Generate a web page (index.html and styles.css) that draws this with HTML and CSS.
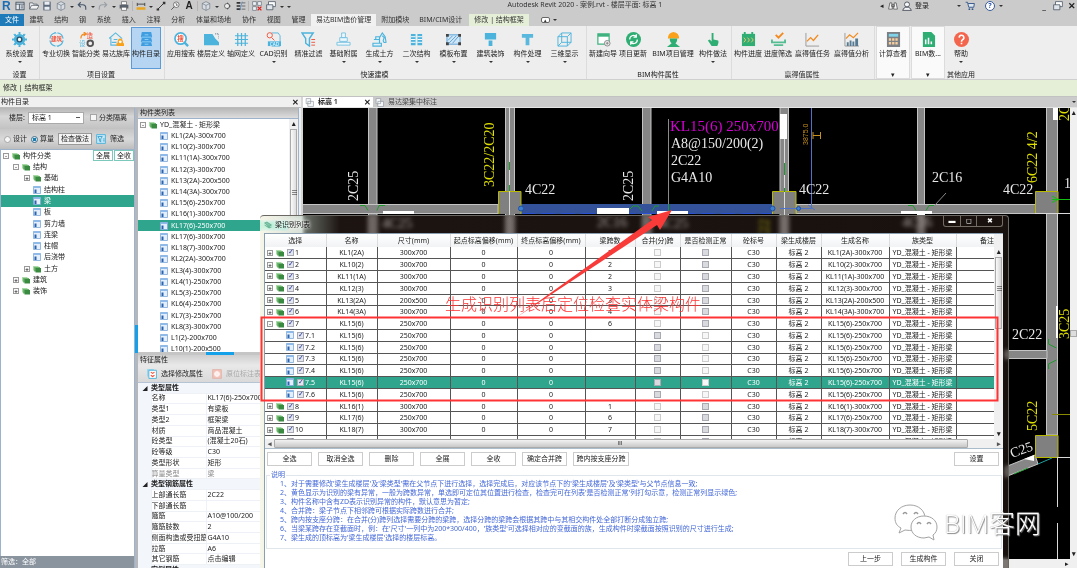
FILE: index.html
```html
<!DOCTYPE html>
<html lang="zh-CN">
<head>
<meta charset="utf-8">
<title>Autodesk Revit 2020 - 案例.rvt - 楼层平面: 标高 1</title>
<link rel="stylesheet" href="styles.css">
</head>
<body>
<svg class="defs" aria-hidden="true">
  <symbol id="i-win" viewBox="0 0 16 16"><rect x="1.500" y="2" width="13" height="12" fill="#e8eef4" stroke="#4d5a66" stroke-width="1.500"/><path d="M1 5h14M7 5v9M9 8h4M9 11h4" stroke="#4d5a66" stroke-width="1.500"/></symbol>
  <symbol id="i-open" viewBox="0 0 16 16"><path d="M1 13V3h5l1 2h6v3M1 13l3-6h12l-3 6z" fill="#f4f4f4" stroke="#59636e" stroke-width="1.300"/></symbol>
  <symbol id="i-save" viewBox="0 0 16 16"><path d="M2 1h12v14H2z" fill="#5c6a7c"/><path d="M4 1h8v5H4zM4 9h8v5H4z" fill="#e9edf2"/></symbol>
  <symbol id="i-cube" viewBox="0 0 16 16"><path d="M8 1l6 3v8l-6 3-6-3V4z" fill="#d8dde3" stroke="#65717d"/><path d="M2 4l6 3 6-3M8 7v8" fill="none" stroke="#65717d"/></symbol>
  <symbol id="i-undo" viewBox="0 0 16 16"><path d="M6 2L2 6l4 4M2 6h7q5 0 5 5v3" fill="none" stroke="#46566a" stroke-width="1.800"/></symbol>
  <symbol id="i-redo" viewBox="0 0 16 16"><path d="M10 2l4 4-4 4M14 6H7q-5 0-5 5v3" fill="none" stroke="#9aa0a7" stroke-width="1.800"/></symbol>
  <symbol id="i-print" viewBox="0 0 16 16"><path d="M4 1h8v5H4z" fill="#fff" stroke="#555"/><path d="M1 6h14v6H1z" fill="#59636e"/><path d="M4 10h8v5H4z" fill="#fff" stroke="#555"/></symbol>
  <symbol id="i-meas" viewBox="0 0 16 16"><path d="M1 10h14v4H1z" fill="#e9a51e"/><path d="M2 3v5M14 3v5M2 5h12" stroke="#444" stroke-width="1.500"/></symbol>
  <symbol id="i-line" viewBox="0 0 16 16"><path d="M3 13L13 3" stroke="#333" stroke-width="1.500"/><path d="M1 12h4v3H1zM11 1h4v4h-4z" fill="#333"/></symbol>
  <symbol id="i-tag" viewBox="0 0 16 16"><circle cx="10" cy="6" r="4.500" fill="#f3f3f3" stroke="#444"/><path d="M7 9l-5 5M9 4l2 1v3" fill="none" stroke="#444" stroke-width="1.300"/></symbol>
  <symbol id="i-sec" viewBox="0 0 16 16"><path d="M1 8h3M8 2l6 6-6 6" fill="#333"/><circle cx="8" cy="8" r="4" fill="#eee" stroke="#333"/></symbol>
  <symbol id="i-thin" viewBox="0 0 16 16"><path d="M1 3h6M1 8h6M1 13h6" stroke="#333" stroke-width="2.500"/><path d="M9 3h6M9 8h6M9 13h6" stroke="#333"/><path d="M10 1L6 15" stroke="#3f7ac0"/></symbol>
  <symbol id="i-closeh" viewBox="0 0 16 16"><path d="M1 1h6v6H1zM9 1h6v6H9zM1 9h6v6H1z" fill="#eef2f6" stroke="#59636e"/><path d="M9 9l6 6M15 9l-6 6" stroke="#d22" stroke-width="2.200"/></symbol>
  <symbol id="i-stack" viewBox="0 0 16 16"><path d="M4 1h11v8H4z" fill="#fff" stroke="#4d5a66" stroke-width="1.300"/><path d="M1 6h10v8H1z" fill="#dfe5eb" stroke="#4d5a66" stroke-width="1.300"/></symbol>
  <symbol id="i-bino" viewBox="0 0 16 16"><path d="M3 3h3l1 10H1zM10 3h3l2 10H9zM6 6h4v3H6z" fill="#f5f5f5" stroke="#333"/></symbol>
  <symbol id="i-user" viewBox="0 0 16 16"><circle cx="8" cy="5.500" r="4" fill="#f7f7f7" stroke="#444b58" stroke-width="1.400"/><path d="M1 15q2-5 5-5h4q3 0 5 5z" fill="#f7f7f7" stroke="#444b58" stroke-width="1.400"/></symbol>
  <symbol id="i-cart" viewBox="0 0 16 16"><path d="M1 2h3l2 8h8l1-6H5" fill="#dfe7f0" stroke="#35588a" stroke-width="1.500"/><circle cx="7" cy="13" r="1.500" fill="#35588a"/><circle cx="12" cy="13" r="1.500" fill="#35588a"/></symbol>
  <symbol id="i-view" viewBox="0 0 16 16"><path d="M2 1h8v5h5v9H5v-5H2z" fill="#f8f8f8" stroke="#7c8894"/><path d="M5 6h5v4H5z" fill="none" stroke="#7c8894"/></symbol>

  <symbol id="r-gear" viewBox="0 0 16 16"><path d="M7 0h2v16H7zM0 7h16v2H0z" fill="#4cb3dc"/><path d="M2 3l1-1 11 11-1 1zM13 2l1 1L3 14l-1-1z" fill="#4cb3dc" stroke="#4cb3dc"/><circle cx="8" cy="8" r="6" fill="#4cb3dc"/><circle cx="8" cy="8" r="2.500" fill="#fff" stroke="#2c5572" stroke-width="1.500"/></symbol>
  <symbol id="r-cycle" viewBox="0 0 16 16"><path d="M1 7a7 7 0 0 1 6-6l-1-1M9 1a7 7 0 0 1 6 6M15 9a7 7 0 0 1-6 6l1 1M7 15a7 7 0 0 1-6-6" fill="none" stroke="#59b8dd" stroke-width="1.300"/><text x="8" y="10" text-anchor="middle" font-size="6" fill="#f0533c" font-weight="700">建筑</text></symbol>
  <symbol id="r-smart" viewBox="0 0 16 16"><path d="M2 7q0-5 5-5M5 0l3 2-3 2" fill="none" stroke="#f28a1e" stroke-width="1.300"/><text x="8" y="6" font-size="7" fill="#f0533c">造</text><text x="0" y="15" font-size="7" fill="#59b8dd">设</text><circle cx="12" cy="12" r="3" fill="none" stroke="#555" stroke-width="2"/></symbol>
  <symbol id="r-lib" viewBox="0 0 16 16"><path d="M0 7l7-6 7 6M2 6v8h7M5 8h4M3 11h5" fill="none" stroke="#59b8dd" stroke-width="1.200"/><path d="M8 12h8v3H8zM9 12q0-5 3-5t3 5z" fill="#f9a11b"/><circle cx="12" cy="10.500" r="1.500" fill="#fff"/></symbol>
  <symbol id="r-cab" viewBox="0 0 16 16"><path d="M3 0h10l1 5-1 1 1 4-1 1 1 4H2l1-4-1-1 1-4-1-1z" fill="#409ee0"/><path d="M3 5.500h10M3 10.500h10M6 3h4M6 8h4M6 13h4" stroke="#8fd0f7"/></symbol>
  <symbol id="r-find" viewBox="0 0 16 16"><circle cx="7" cy="7" r="6" fill="#fff" stroke="#4cb3dc" stroke-width="1.800"/><path d="M11 11l4 4" stroke="#4cb3dc" stroke-width="2.500"/><text x="7" y="10" text-anchor="middle" font-size="7" fill="#f0533c" font-weight="700">搜</text></symbol>
  <symbol id="r-floor" viewBox="0 0 16 16"><path d="M0 2h9l3 5 4 4v3H0z" fill="#4cb3dc"/><path d="M12 2h4v5" fill="none" stroke="#3b5f73" stroke-dasharray="1 1"/></symbol>
  <symbol id="r-grid" viewBox="0 0 16 16"><path d="M4 1v14M8 1v14M12 1v14M1 4h14M1 8h14M1 12h14" stroke="#4cb3dc" stroke-width="1.300"/></symbol>
  <symbol id="r-cad" viewBox="0 0 16 16"><path d="M6 1h7l2 3v11H6" fill="none" stroke="#59b8dd"/><circle cx="4" cy="3.500" r="2.800" fill="none" stroke="#f0533c"/><path d="M6 6l3 3" stroke="#f0533c"/><path d="M2 10h14v5H2z" fill="#4cb3dc"/><text x="9" y="14.500" text-anchor="middle" font-size="5" fill="#fff">CAD</text></symbol>
  <symbol id="r-filter" viewBox="0 0 16 16"><path d="M1 1h12L9 7v8l-4-3V7z" fill="none" stroke="#4cb3dc" stroke-width="1.500"/><path d="M11 8h4M11 11h4M11 14h4" stroke="#f0533c"/></symbol>
  <symbol id="r-base" viewBox="0 0 16 16"><path d="M6 1h4v5H6zM4 6h8v4H4zM1 11h14v3H1z" fill="#eef8fc" stroke="#77c2e0"/></symbol>
  <symbol id="r-dig" viewBox="0 0 16 16"><path d="M1 12h9v3H1zM2 8h6v4M4 8V5h4v3M8 6l3-5 3 4 1 6q-3 1-3-2l1-3-2-2" fill="#dff1f8" stroke="#4cb3dc" stroke-width="1.200"/></symbol>
  <symbol id="r-second" viewBox="0 0 16 16"><path d="M2 2h5v12H2zM9 2h5v12H9z" fill="#4cb3dc"/><path d="M2 5h5M2 8h5M2 11h5M9 5h5M9 8h5M9 11h5" stroke="#fff"/></symbol>
  <symbol id="r-board" viewBox="0 0 16 16"><path d="M1 3h14v10H1z" fill="#cfe6f6" stroke="#5a9fd6"/><path d="M3 12l8-8M7 12l6-7M2 9l5-5" stroke="#5a9fd6"/><path d="M0 2h3v3H0zM13 2h3v3h-3zM0 11h3v3H0zM13 11h3v3h-3z" fill="#444"/></symbol>
  <symbol id="r-brush" viewBox="0 0 16 16"><path d="M2 1h12v7H2zM6 9h4v6H6z" fill="#4cb3dc"/></symbol>
  <symbol id="r-tee" viewBox="0 0 16 16"><path d="M2 2h12v4h-4v8H6V6H2z" fill="#59b8dd"/></symbol>
  <symbol id="r-3d" viewBox="0 0 16 16"><path d="M1 5h10v10H1zM5 1h10v10H5zM1 5l4-4M11 5l4-4M11 15l4-4M1 15l4-4" fill="none" stroke="#4cb3dc"/></symbol>
  <symbol id="r-new" viewBox="0 0 16 16"><path d="M2 2h12v11H2z" fill="#fff" stroke="#3fb27f" stroke-width="1.300"/><path d="M2 2h12v3H2z" fill="#3fb27f"/><circle cx="12" cy="12" r="3" fill="#eee" stroke="#888"/><path d="M12 10.500v3M10.500 12h3" stroke="#888"/></symbol>
  <symbol id="r-refresh" viewBox="0 0 16 16"><circle cx="8" cy="8" r="8" fill="#2fae74"/><path d="M4 8a4 4 0 0 1 7-3M12 8a4 4 0 0 1-7 3M11 2.500V5.500H8M5 13.500V10.500H8" fill="none" stroke="#fff" stroke-width="1.300"/></symbol>
  <symbol id="r-worker" viewBox="0 0 16 16"><path d="M2 7q0-6 6-7 6 1 6 7z" fill="#f9a11b"/><path d="M4 7h8q0 4-2 5l5 4H1l5-4Q4 11 4 7z" fill="#2fae74"/></symbol>
  <symbol id="r-hand" viewBox="0 0 16 16"><path d="M6 1h2v7l5 1q1 2-1 6H6L2 9l2-1 2 2z" fill="#2fae74"/></symbol>
  <symbol id="r-cal" viewBox="0 0 16 16"><path d="M1 2h14v13H1z" fill="#2fae74"/><path d="M4 0v3M12 0v3" stroke="#2fae74" stroke-width="2"/><path d="M3 6l2 2.500L3 11M7 6l2 2.500L7 11M11 6l2 2.500L11 11" fill="none" stroke="#f4c26a"/></symbol>
  <symbol id="r-check" viewBox="0 0 16 16"><path d="M5 3l3 3 5-5" fill="none" stroke="#f28a1e" stroke-width="2"/><path d="M1 8v3h14V8M3 14h10" fill="none" stroke="#55bd92" stroke-width="2"/></symbol>
  <symbol id="r-trend" viewBox="0 0 16 16"><path d="M1 1v14h14" fill="none" stroke="#999"/><path d="M2 10l4-4 3 3 5-6" fill="none" stroke="#f28a1e" stroke-width="1.400"/></symbol>
  <symbol id="r-bars" viewBox="0 0 16 16"><path d="M1 1v14h15" fill="none" stroke="#999"/><path d="M3 11h2v4H3zM6 9h2v6H6zM9 10h2v5H9zM12 7h3v8h-3z" fill="#557a91"/><path d="M2 7l4-4 4 3 5-5" fill="none" stroke="#f28a1e" stroke-width="1.300"/></symbol>
  <symbol id="r-calc" viewBox="0 0 16 16"><path d="M1 0h14v16H1z" fill="#7c7f84"/><path d="M3 2h10v3H3z" fill="#7fd4ea"/><path d="M3 8h10M3 12h10" stroke="#f5cfa0" stroke-width="2.500" stroke-dasharray="2.500 1"/></symbol>
  <symbol id="r-doc" viewBox="0 0 16 16"><path d="M2 0h9l4 4v12H2z" fill="#2fae74"/><path d="M5 8v5M8 6v7M11 10v3" stroke="#fff" stroke-width="1.600"/></symbol>
  <symbol id="r-help" viewBox="0 0 16 16"><circle cx="8" cy="8" r="8" fill="#f3664d"/><path d="M5.500 6a2.500 2.500 0 1 1 3.500 2.300q-1 .7-1 2M8 11.500v1.500" fill="none" stroke="#fff" stroke-width="1.700"/></symbol>

  <symbol id="t-folder" viewBox="0 0 16 16"><path d="M0 2h11v9H0z" fill="#a9dba9"/><path d="M2 4h12v9H2z" fill="#6fb56f"/><path d="M5 6h11v9H5z" fill="#3b8a42"/></symbol>
  <symbol id="t-leaf" viewBox="0 0 16 16"><path d="M1 1h14v14H1z" fill="#e4effb" stroke="#7ba7d8" stroke-width="1.600"/><path d="M1 1h14v3H1z" fill="#8fbbea"/><path d="M3 7h4v7H3z" fill="#2b62b0"/></symbol>
  <symbol id="t-edit" viewBox="0 0 16 16"><path d="M0 0h11v12H0z" fill="#9bd8ee"/><path d="M3 2h12v13H3z" fill="#fff" stroke="#4cb3dc" stroke-width="1.500"/><path d="M6 5l3 2 3-2M6 10l3 2 3-2" fill="none" stroke="#f0533c" stroke-width="1.800"/></symbol>
  <symbol id="t-note" viewBox="0 0 16 16"><path d="M1 1h14v14H1z" fill="#f3c2b8" stroke="#dda79c"/><path d="M5 5h6v6H5zM8 3v10M3 8h10" fill="none" stroke="#fff" stroke-width="1.500"/></symbol>
  <symbol id="t-filter" viewBox="0 0 16 16"><path d="M1 1h14v14H1z" fill="#c9e8f6" stroke="#4cb3dc" stroke-width="1.500"/><path d="M3 4h7L7.500 8v5L5.500 11V8zM11 8h3M11 11h3" fill="none" stroke="#2f9bcb" stroke-width="1.300"/></symbol>
</svg>

<div class="app">
  <header class="titlebar">
    <div class="quick" id="quick"></div>
    <h1 class="title">Autodesk Revit 2020 - 案例.rvt - 楼层平面: 标高 1</h1>
    <div class="account">
      <span>◂</span>
      <button aria-label="搜索"><svg><use href="#i-bino"/></svg></button>
      <button class="login"><svg><use href="#i-user"/></svg>登录</button>
      <i class="caret push"></i>
      <button aria-label="商店"><svg><use href="#i-cart"/></svg></button>
      <button class="qmark" aria-label="帮助">?</button>
      <i class="caret"></i>
      <div class="winctl"><button aria-label="最小化">_</button><button aria-label="还原"><svg><use href="#i-stack"/></svg></button><button aria-label="关闭">✕</button></div>
    </div>
  </header>

  <nav class="tabs">
    <button class="tab file">文件</button>
    <div class="tabset">
      <button class="tab">建筑</button><button class="tab">结构</button><button class="tab">钢</button><button class="tab">系统</button><button class="tab">插入</button><button class="tab">注释</button><button class="tab">分析</button><button class="tab">体量和场地</button><button class="tab">协作</button><button class="tab">视图</button><button class="tab">管理</button>
    </div>
    <button class="tab active">易达BIM造价管理</button>
    <button class="tab">附加模块</button>
    <button class="tab">BIM/CIM设计</button>
    <button class="tab context">修改 | 结构框架</button>
    <button class="tab mode" aria-label="显示方式"><span class="pill">▴</span><i class="caret"></i></button>
  </nav>

  <section class="ribbon" id="ribbon"></section>
  <div class="options">修改 | 结构框架</div>

  <main class="work">
    <aside class="dock">
      <div class="dock-head"><span>构件目录</span><button aria-label="关闭面板">✕</button></div>
      <div class="dock-cols">
        <section class="catalog">
          <div class="bar bar-a">
            <label for="level">楼层:</label>
            <select id="level"><option>标高 1</option></select>
            <label class="opt"><input type="checkbox">分类隔离</label>
          </div>
          <div class="bar bar-b">
            <label class="opt"><input type="radio" name="mode">设计</label>
            <label class="opt"><input type="radio" name="mode" checked>算量</label>
            <button class="box">检查做法</button>
            <button class="flt"><svg><use href="#t-filter"/></svg>筛选</button>
          </div>
          <div class="tree-wrap"><ul class="tree" id="catalog"></ul></div>
          <div class="status">筛选：全部</div>
        </section>
        <div class="split"><i></i></div>
        <section class="detail">
          <h2>构件类列表</h2>
          <div class="list-wrap"><ul class="tree" id="types"></ul><div class="vscroll"><b>▴</b><i>≡</i></div></div>
          <div class="hsplit"><i></i></div>
          <h2 class="prop-title">特征属性</h2>
          <div class="prop-tools">
            <button><svg><use href="#t-edit"/></svg>选择修改属性</button>
            <button disabled><svg><use href="#t-note"/></svg>原位标注表</button>
          </div>
          <div class="prop-wrap"><table class="props"><colgroup><col class="c13"><col class="c55"><col></colgroup><tbody id="props"></tbody></table></div>
        </section>
      </div>
    </aside>

    <section class="views">
      <div class="view-tabs">
        <button class="vtab on"><svg><use href="#i-view"/></svg>标高 1<span>✕</span></button>
        <button class="vtab"><svg><use href="#i-view"/></svg>易达梁集中标注</button>
        <i class="caret"></i>
      </div>
      <div class="view-body">
        <svg class="plan" role="img" aria-label="梁平面图">
          <g transform="translate(-303 -107)">
            <g fill="#868686" stroke="#c4c4c4">
              <path d="M368.500 100h8.500v150h-8.500zM505.500 100h9v150h-9zM642.500 100h8.500v150h-8.500zM780 100h8.500v150H780zM917.500 100h7v150h-7zM1046.500 100h11v334h-11z"/>
              <path d="M300 203.500h198v9H300zM796 203.500h240v9H796zM1005 349.500h42v8h-42z"/>
              <path d="M1005 466l30-12 3 9-33 13z"/>
            </g>
            <path d="M1024 458l10-4v6z" fill="#fff"/>
            <path d="M521 203h251v10H521z" fill="#345299"/>
            <path d="M521 212.500h251" stroke="#2a52d0" stroke-dasharray="14 6"/>
            <g fill="#808080" stroke="#b8b800"><path d="M498.500 213v-22.500H521V213M772.500 213v-22.500H796V213M1035.500 212.500v-22h22.500v22M1035.500 434.500h22.500v22h-22.500z"/></g>
            <path d="M509.500 107v140M784.500 138v104M1035 212.500h36M1057.500 213v110M1058 456.500h13M1057.500 456v50M1057.500 522v46" stroke="#d9d9d9"/>
            <path d="M780 113h7v25h-7zM1053 107h5v12h-5zM597 207h32v6h-32zM383 210h31v3h-31zM657 210h31v3h-31zM901 210h31v3h-31zM917 212h8v3h-8zM1056 305h2v32h-2z" fill="#fff"/>
            <path d="M668.500 118v85M946 192l-11 12" stroke="#8b8b8b"/>
            <g fill="none" stroke="#1f9a2d"><path d="M360 204.500h5l3 5M385 204.500h-6l-2 5M630 208l3-3h5l4 5M652 210l3-5h4M668.500 203v7M509.500 161v8M509.500 184v6M784.500 162v12M784.500 187v4M908 204.500h5l3 5M934 204.500h-5l-3 5M1048.500 338v5l8 4M1048.500 368v-5l8-4"/><path d="M1052 198.500h19M1052 195l6 3.500-6 3" stroke="#12c012"/></g>
            <path d="M1014 473l14-6" stroke="#1f9a2d"/><path d="M1038 463l14-6" stroke="#1aa0a0"/>
            <path d="M811.500 107v100M780 207.500h32M808 204l7 5" stroke="#4d72c8" fill="none"/>
            <g fill="#3f7fd0" stroke="#1f4fa0"><circle cx="521" cy="207.500" r="2.500"/><circle cx="772.500" cy="207.500" r="2.500"/><circle cx="798.500" cy="207.500" r="2"/></g>
            <path d="M813 134.500h8M813 131v7M820.500 131v7" stroke="#c8901e"/>
            <path d="M1052 413.500h19" stroke="#8a8a00"/>
            <g class="cad">
              <text x="525" y="193">4C22</text><text x="799" y="193">4C22</text><text x="932" y="181">2C16</text><text x="1003" y="193">4C22</text><text x="1012" y="338">2C22</text><text x="1064" y="187">1</text>
              <text x="671" y="147">A8@150/200(2)</text><text x="671" y="164">2C22</text><text x="671" y="181">G4A10</text>
              <text class="big magenta" x="670" y="130">KL15(6) 250x700</text>
              <text transform="translate(358 200) rotate(-90)">2C25</text>
              <text transform="translate(633 200) rotate(-90)">2C25</text>
              <text transform="translate(1012 457) rotate(-20)">C25</text>
              <text x="382" y="227">4C25</text><text x="597" y="226">2C16</text><text x="658" y="227">4C25</text><text x="902" y="226">4C16</text>
              <g class="yellow">
                <text transform="translate(494 186) rotate(-90)">3C22/2C20</text>
                <text transform="translate(1037 182) rotate(-90)">6C22 4/2</text>
                <text transform="translate(1069 120) rotate(-90)">2C25</text>
                <text transform="translate(1069 338) rotate(-90)">3C25</text>
                <text transform="translate(1037 430) rotate(-90)">5C22</text>
                <text transform="translate(769 248) rotate(-90)">3C22</text>
              </g>
              <text class="dim" transform="translate(808 144) rotate(-90)">3875.0</text>
            </g>
          </g>
        </svg>
        <div class="vbar"><b>▴</b><i></i><b>▾</b></div>
        <div class="hbar">▸</div>
      </div>
    </section>
  </main>
</div>

<section class="dialog" role="dialog" aria-label="梁识别列表">
  <div class="dlg-title">
    <svg viewBox="0 0 16 16"><path d="M1 4l5-2 9 6-5 3zM1 8l9 6 5-2" fill="#7fc8a8" stroke="#3f8f70"/></svg>
    <span>梁识别列表</span>
    <div class="dlg-ctl"><button aria-label="最小化">▬</button><button aria-label="最大化">◻</button><button aria-label="关闭">✖</button></div>
  </div>
  <div class="dlg-body">
    <div class="grid-wrap">
      <div class="grid-clip">
        <table class="beams">
          <colgroup><col class="c61"><col class="c51"><col class="c73"><col class="c67"><col class="c68"><col class="c50"><col class="c45"><col class="c51"><col class="c45"><col class="c45"><col class="c68"><col class="c67"><col></colgroup>
          <thead><tr><th>选择</th><th>名称</th><th>尺寸(mm)</th><th>起点标高偏移(mm)</th><th>终点标高偏移(mm)</th><th>梁跨数</th><th>合并(分)跨</th><th>是否检测正常</th><th>砼标号</th><th>梁生成楼层</th><th>生成名称</th><th>族类型</th><th class="last">备注</th></tr></thead>
          <tbody id="beams"></tbody>
        </table>
      </div>
      <div class="gv"><b>▴</b><i>≡</i><b>▾</b></div>
    </div>
    <div class="gh"><b>◂</b><i>III</i><b>▸</b></div>
    <div class="actions">
      <button>全选</button><button>取消全选</button><button>删除</button><button>全展</button><button>全收</button><button>确定合并跨</button><button class="wide">跨内按支座分跨</button><button class="end">设置</button>
    </div>
    <fieldset>
      <legend>说明</legend>
      <p>1、对于需要修改'梁生成楼层'及'梁类型'需在父节点下进行选择，选择完成后，对应该节点下的'梁生成楼层'及'梁类型'与父节点信息一致;</p>
      <p>2、黄色显示为识别的梁有异常，一般为跨数异常，单选即可定位其位置进行检查，检查完可在列表'是否检测正常'列打勾示意，检测正常列显示绿色;</p>
      <p>3、构件名称中含有ZD表示识别异常的构件，默认意思为暂定;</p>
      <p>4、合并跨：梁子节点下相邻跨可根据实际跨数进行合并;</p>
      <p>5、跨内按支座分跨：在合并(分)跨列选择需要分跨的梁跨，选择分跨的梁跨会根据其跨中与其相交构件处全部打断分成独立跨;</p>
      <p>6、当梁某跨存在变截面时，例：在'尺寸'一列中为200*300/400，'族类型'可选择相对应的变截面的族，生成构件时梁截面按照识别的尺寸进行生成;</p>
      <p>7、梁生成的顶标高为'梁生成楼层'选择的楼层标高。</p>
    </fieldset>
    <div class="actions foot"><button>上一步</button><button>生成构件</button><button>关闭</button></div>
  </div>
</section>

<svg class="markup" aria-hidden="true">
  <g transform="translate(-260 -200)">
    <rect x="261.500" y="317.500" width="736" height="83" fill="none" stroke="#f33" stroke-width="2"/>
    <path d="M517 317L652 220l-4-3 24-7-12 20-3-5z" fill="#f83a38"/>
    <text x="445" y="310">生成识别列表后定位检查实体梁构件</text>
  </g>
</svg>

<div class="watermark">
  <svg viewBox="0 0 44 38"><g fill="#fff" stroke="#a2a2a2"><path d="M16 1C7 1 1 7 1 14c0 5 2 8 6 10l-2 5 6-3c12 2 20-3 20-12C31 7 25 1 16 1z"/><path d="M30 12c-8 0-13 5-13 11s5 11 13 11l5-1 5 3-1-5c3-2 4-5 4-8 0-6-5-11-13-11z"/></g><g fill="none" stroke="#999" stroke-width="1.500"><path d="M9 10q2-3 4 0M20 10q2-3 4 0M23 20q2-3 4 0M33 20q2-3 4 0"/></g></svg>
  <span>BIM客网</span>
</div>
<script src="app.js"></script>
</body>
</html>
```

FILE: app.js
```js
const icon = (id) => `<svg><use href="#${id}"/></svg>`;
const fill = (id, html) => { document.getElementById(id).innerHTML = html; };

// Quick access toolbar: "v" is a drop-down caret, "|" a separator.
fill('quick', '<b class="logo">R</b>' + [
  'i-win', 'i-open', 'i-save', 'i-cube', 'v', 'i-undo', 'v', 'i-redo', 'v', 'i-print', '|',
  'i-meas', 'v', 'i-line', 'i-tag', 'A', '|', 'i-cube', 'v', 'i-sec', 'i-thin', '|', 'i-closeh', 'i-stack', 'v', 'v'
].map((k) => {
  if (k === 'v') return '<i class="caret"></i>';
  if (k === '|') return '<i class="sep"></i>';
  if (k === 'A') return '<button class="letter">A</button>';
  return `<button aria-label="${k.slice(2)}">${icon(k)}</button>`;
}).join(''));

// Ribbon groups: [label, class, [[text, icon, size, hasMenu]]]
const groups = [
  ['设置', 'g-set', [['系统设置', 'r-gear', 'm', 1]]],
  ['项目设置', '', [['专业切换', 'r-cycle', 's'], ['智能分类', 'r-smart', 's'], ['易达族库', 'r-lib', 's'], ['构件目录', 'r-cab', 's on']]],
  ['快速建模', '', [['应用搜索', 'r-find', 's'], ['楼层定义', 'r-floor', 's'], ['轴网定义', 'r-grid', 's'], ['CAD识别', 'r-cad', 'm', 1], ['精准过滤', 'r-filter', 'm'], ['基础附属', 'r-base', 'm', 1], ['生成土方', 'r-dig', 'l', 1], ['二次结构', 'r-second', 'l', 1], ['模板布置', 'r-board', 'l', 1], ['建筑装饰', 'r-brush', 'l', 1], ['构件处理', 'r-tee', 'l', 1], ['三维显示', 'r-3d', 'l', 1]]],
  ['BIM构件属性', '', [['新建向导', 'r-new', 's'], ['项目更新', 'r-refresh', 's'], ['BIM项目管理', 'r-worker', 'xl'], ['构件做法', 'r-hand', 's', 1]]],
  ['赢得值属性', '', [['构件进度', 'r-cal', 's'], ['进度筛选', 'r-check', 's'], ['赢得值任务', 'r-trend', 'x'], ['赢得值分析', 'r-bars', 'x']]],
  ['▾', 'card', [['计算查看', 'r-calc', 's']]],
  ['▾', 'card', [['BIM数...', 'r-doc', 's']]],
  ['其他应用', 'last', [['帮助', 'r-help', 's', 1]]]
];
fill('ribbon', groups.map(([name, cls, items]) =>
  `<div class="group ${cls}"><div class="items">` +
  items.map(([t, i, s, m]) => `<button class="rb ${s}">${icon(i)}<span>${t}</span>${m ? '<i class="caret"></i>' : ''}</button>`).join('') +
  `</div><div class="gname">${name}</div></div>`).join(''));

// Trees: [level, kind, text, selected]; kind is "-", "+" or "leaf".
const row = ([lv, kind, text, sel, extra]) =>
  `<li class="lv${lv} ${kind === 'leaf' ? 'leaf' : ''} ${sel ? 'sel' : ''}">` +
  (kind === 'leaf' ? icon('t-leaf') : `<button class="tg">${kind}</button>${icon('t-folder')}`) +
  `<span>${text}</span>${extra || ''}</li>`;
fill('catalog', [
  [0, '-', '构件分类', 0, '<button class="mini first">全展</button><button class="mini">全收</button>'],
  [1, '-', '结构'], [2, '+', '基础'], [2, 'leaf', '结构柱'], [2, 'leaf', '梁', 1], [2, 'leaf', '板'], [2, 'leaf', '剪力墙'],
  [2, 'leaf', '连梁'], [2, 'leaf', '柱帽'], [2, 'leaf', '后浇带'], [2, '+', '土方'], [1, '+', '建筑'], [1, '+', '装饰']
].map(row).join(''));
fill('types', row([0, '-', 'YD_混凝土 - 矩形梁']) + [
  'KL1(2A)-300x700', 'KL10(2)-300x700', 'KL11(1A)-300x700', 'KL12(3)-300x700', 'KL13(2A)-200x500', 'KL14(3A)-300x700',
  'KL15(6)-250x700', 'KL16(1)-300x700', 'KL17(6)-250x700', 'KL17(6)-300x700', 'KL18(7)-300x700', 'KL2(2A)-300x700',
  'KL3(4)-300x700', 'KL4(1)-250x700', 'KL5(3)-250x700', 'KL6(4)-250x700', 'KL7(3)-250x700', 'KL8(3)-300x700',
  'L1(2)-200x700', 'L10(1)-200x500'
].map((t) => row([1, 'leaf', t, t === 'KL17(6)-250x700'])).join(''));

// Property grid: a row with no value is a category.
fill('props', [
  ['类型属性'], ['名称', 'KL17(6)-250x700'], ['类型1', '有梁板'], ['类型2', '框架梁'], ['材质', '商品混凝土'],
  ['砼类型', '(混凝土20石)'], ['砼等级', 'C30'], ['类型形状', '矩形'], ['算量类型', '梁', 'dim'],
  ['类型钢筋属性'], ['上部通长筋', '2C22'], ['下部通长筋', ''], ['箍筋', 'A10@100/200'], ['箍筋肢数', '2'],
  ['侧面构造或受扭筋', 'G4A10'], ['拉筋', 'A6'], ['其它钢筋', '点击编辑'], ['实例属性']
].map(([k, v, c]) => v === undefined
  ? `<tr class="cat"><td>◢</td><th colspan="2">${k}</th></tr>`
  : `<tr class="${c || ''}"><td></td><th>${k}</th><td>${v}</td></tr>`).join(''));

// Beam table
const beams = [
  ['1', 'KL1(2A)', '300x700', 2], ['2', 'KL10(2)', '300x700', 2], ['3', 'KL11(1A)', '300x700', 2], ['4', 'KL12(3)', '300x700', 3],
  ['5', 'KL13(2A)', '200x500', 3], ['6', 'KL14(3A)', '300x700', 4], ['7', 'KL15(6)', '250x700', 6],
  ...[1, 2, 3, 4, 5, 6].map((n) => ['7.' + n, 'KL15(6)', '250x700', '']),
  ['8', 'KL16(1)', '300x700', 1], ['9', 'KL17(6)', '250x700', 6], ['10', 'KL18(7)', '300x700', 7], ['11', 'KL2(2A)', '300x700', 2]
];
fill('beams', beams.map(([n, name, size, spans]) => {
  const child = n.includes('.');
  const lead = child ? icon('t-leaf') : `<button class="tg">${n === '7' ? '-' : '+'}</button>${icon('t-folder')}`;
  const box = (on, label) => `<input type="checkbox" class="cell ${on ? '' : 'faint'}" aria-label="${label}">`;
  return `<tr class="${n === '7.5' ? 'sel' : ''}"><td><div class="pick ${child ? 'child' : ''}">${lead}<label><input type="checkbox" checked>${n}</label></div></td>` +
    `<td>${name}</td><td>${size}</td><td>0</td><td>0</td><td>${spans}</td><td>${box(child, '合并(分)跨')}</td><td>${box(!child, '是否检测正常')}</td>` +
    `<td>C30</td><td>标高 2</td><td>${name}-${size}</td><td>YD_混凝土 - 矩形梁</td><td></td></tr>`;
}).join(''));
```

FILE: styles.css
```css
* { box-sizing: border-box; margin: 0; padding: 0; }
html, body { height: 100%; overflow: hidden; }
body { position: relative; font: 7px/10px "Noto Sans", "Noto Sans CJK SC", sans-serif; color: #222; background: #ccc; }
button, select, input { font: inherit; color: inherit; background: none; border: 0; }
button { white-space: nowrap; }
ul { list-style: none; }
h1, h2 { font: inherit; }
.defs { position: absolute; width: 0; height: 0; }
.app { display: flex; flex-direction: column; height: 100%; }
.caret { display: inline-block; flex: none; border: 2px solid transparent; border-top-color: #333; border-bottom: 0; }

.titlebar { display: flex; align-items: center; height: 14px; flex: none; background: #cbcbcb; padding-bottom: 2px; }
.quick { display: flex; align-items: center; width: 292px; }
.quick button { width: 14px; height: 12px; }
.quick svg, .account svg { display: block; width: 10px; height: 10px; margin: auto; }
.quick .caret { margin: 2px 1px 0 2px; }
.quick .sep { width: 1px; height: 10px; margin: 0 1px; background: #b4b4b4; }
.logo { width: 13px; padding-left: 2px; font: 700 12px/14px "Liberation Sans", sans-serif; color: #1c6db3; }
.letter { font: 700 10px/12px "Liberation Sans", sans-serif; }
.title { flex: 1; text-align: center; color: #333; line-height: 10px; padding-bottom: 3px; }
.account { display: flex; align-items: center; width: 199px; gap: 4px; padding: 0 0 0 2px; }
.account button { height: 12px; }
.account .login { display: flex; align-items: center; gap: 3px; line-height: 12px; }
.account .push { margin-left: auto; }
.account .qmark { width: 10px; height: 10px; margin-left: 6px; border: 1px solid #3a5a9a; border-radius: 50%; background: #fff; color: #2351b5; font-weight: 700; line-height: 8px; }
.winctl { display: flex; gap: 4px; margin-left: 32px; }
.winctl button { width: 10px; font-size: 9px; line-height: 12px; font-weight: 700; }

.tabs { display: flex; align-items: stretch; height: 12px; flex: none; background: #cbcbcb; }
.tab { line-height: 12px; padding: 0 5px; color: #333; }
.file { width: 24px; background: #1e7ab8; color: #fff; }
.tabset { display: flex; width: 287px; }
.tabset .tab { flex: 1 1 auto; }
.active { background: #f1f1f1; }
.context { background: #e5eed6; margin-left: 2px; }
.mode { display: flex; align-items: center; gap: 3px; padding-left: 12px; }
.pill { width: 9px; height: 6px; border: 1px solid #666; border-radius: 2px; background: #fff; line-height: 4px; font-size: 5px; }

.ribbon { display: flex; flex: none; height: 54px; background: #eee; border-bottom: 1px solid #cfcfcf; }
.group { display: flex; flex-direction: column; justify-content: space-between; padding: 0 3px 0 1px; border-right: 1px solid #dcdcdc; }
.items { display: flex; padding-top: 1px; }
.rb { display: flex; flex-direction: column; align-items: center; height: 42px; padding-top: 4px; border: 1px solid transparent; }
.rb svg { width: 15px; height: 15px; flex: none; }
.rb span { margin-top: 2px; line-height: 10px; }
.rb .caret { margin-top: 2px; }
.s { width: 30px; }
.m { width: 35px; }
.l { width: 37px; }
.x { width: 39px; }
.xl { width: 50px; }
.on.rb { background: #b5d5f3; border-color: #5a9bd8; }
.gname { text-align: center; line-height: 12px; white-space: nowrap; }
.group.g-set { padding: 0 2px; }
.group.last { padding: 0 1px; border: 0; }
.group.card { padding: 0 1px; background: #fafafa; border: 1px solid #dcdcdc; margin-left: 1px; }
.card .items { padding: 0; }

.options { flex: none; height: 16px; padding-left: 3px; line-height: 16px; background: #e5eed6; }

.work { display: flex; flex: 1; min-height: 0; border-top: 1px solid #c2c2c2; }
.dock { display: flex; flex-direction: column; width: 301px; background: #eee; }
.dock-head { display: flex; justify-content: space-between; height: 11px; padding: 0 2px 0 1px; background: #f0f0f0; border-bottom: 1px solid #bbb; }
.dock-head button { font-size: 8px; font-weight: 700; line-height: 10px; }
.dock-cols { display: flex; flex: 1; min-height: 0; padding-right: 2px; }
.catalog { display: flex; flex-direction: column; width: 134px; }
.bar { display: flex; align-items: center; flex: none; background: linear-gradient(#b6b6b6, #d6d6d6 40%, #c2c2c2); }
.bar-a { height: 21px; padding-left: 9px; padding-bottom: 4px; padding-top: 2px; gap: 3px; }
.bar-b { height: 20px; padding-left: 4px; gap: 4px; background: linear-gradient(#c6c6c6, #d9d9d9 50%, #bdbdbd); }
.bar select { appearance: none; width: 56px; height: 12px; padding-left: 3px; border: 1px solid #aaa; background: #fff linear-gradient(#555, #555) right 3px center / 4px 1px no-repeat; line-height: 10px; }
.opt { display: flex; align-items: center; gap: 2px; white-space: nowrap; }
.bar-a .opt { margin-left: 3px; }
.opt input { appearance: none; width: 7px; height: 7px; border: 1px solid #a5a5a5; background: #f6f6f6; }
.opt input[type=radio] { border-radius: 50%; }
.opt input[type=radio]:checked { border-color: #44708c; background: radial-gradient(#1c7fb0 40%, #d8eaf4 50%); }
.box { height: 12px; padding: 0 2px; border: 1px solid #999; background: #f4f4f4; }
.flt { display: flex; align-items: center; gap: 4px; }
.flt svg { width: 10px; height: 10px; }
.tree-wrap { flex: 1; min-height: 0; background: #fff; border: 1px solid #9db3cc; border-width: 1px 0 0 1px; }
.status { height: 12px; flex: none; padding-left: 1px; line-height: 12px; color: #fff; background: #8a949f; }
.tree { display: flex; flex-direction: column; }
.tree li { display: flex; flex: 1; align-items: center; gap: 3px; min-height: 0; white-space: nowrap; }
.tree svg, .pick svg, .prop-tools svg { flex: none; width: 8px; height: 8px; }
#catalog { height: 147px; }
#types { flex: 1; height: 236px; }
.tg { flex: none; width: 6px; height: 6px; border: 1px solid #999; background: #fafafa; font: 700 6px/4px "Liberation Sans", sans-serif; color: #222; }
.lv0 { padding-left: 2px; }
.lv1 { padding-left: 12px; }
.lv2 { padding-left: 23px; }
.lv2.leaf { padding-left: 32px; }
.lv1.leaf { padding-left: 22px; }
.tree .sel { background: #2fa58d; color: #fff; }
.mini { height: 11px; padding: 0 2px; border: 1px solid #7cc8bb; background: #fff; line-height: 9px; margin-left: -2px; }
.mini.first { margin-left: auto; }
.split { display: flex; flex-direction: column; width: 4px; background: #b4b7bb; border-left: 1px solid #9db3cc; }
.split i { height: 28px; margin-top: 217px; background: #15a0ea; }
.detail { display: flex; flex-direction: column; flex: 1; min-width: 0; border-right: 1px solid #9db3cc; }
.detail h2 { height: 10px; padding-left: 2px; background: linear-gradient(#b6b6b6, #ddd); flex: none; }
.list-wrap { display: flex; height: 234px; flex: none; overflow: hidden; background: #fff; border-top: 1px solid #9db3cc; }
.vscroll { display: flex; flex-direction: column; width: 9px; text-align: center; background: #f0f0f0; }
.vscroll i { flex: 1; margin: 0 1px; padding-top: 58px; border: 1px solid #aaa; background: linear-gradient(90deg, #fafafa, #ddd); font-style: normal; }
.hsplit { height: 3px; flex: none; padding: 0 24px 0 68px; background: #c5c5c5; }
.hsplit i { display: block; width: 28px; height: 3px; background: #15a0ea; }
.detail .prop-title { background: linear-gradient(#cfcfcf, #e8e8e8); }
.prop-tools { display: flex; align-items: center; gap: 9px; height: 17px; padding-left: 9px; flex: none; background: linear-gradient(#e9e9e9, #d9d9d9); }
.prop-tools button { display: flex; align-items: center; gap: 4px; }
.prop-tools button:disabled { color: #aaa; }
.prop-tools svg { width: 10px; height: 10px; }
.prop-wrap { flex: 1; min-height: 0; overflow: hidden; background: #fff; border-top: 1px solid #b5c3d5; }
.props { width: 100%; height: 192px; border-collapse: collapse; table-layout: fixed; line-height: 8px; }
.c13 { width: 13px; }
.c55 { width: 55px; }
.props th { font-weight: 400; text-align: left; border: 1px solid #eef1f6; white-space: nowrap; overflow: hidden; }
.props td { border: 1px solid #eef1f6; white-space: nowrap; padding-left: 1px; }
.props td:first-child { background: #f3f6fb; border: 0; text-align: center; font-size: 5px; }
.props .cat th { font-weight: 700; background: #f3f6fb; border: 0; }
.props .dim { color: #888; }

.views { display: flex; flex-direction: column; flex: 1; min-width: 0; border-left: 2px solid #d5d5d5; }
.view-tabs { display: flex; height: 11px; flex: none; background: #cbcbcb; border-bottom: 1px solid #e5e5e5; }
.view-tabs > .caret { margin: 4px 1px 0 auto; }
.vtab { display: flex; align-items: center; gap: 4px; padding: 0 2px; color: #444; }
.vtab.on { width: 70px; background: #fff; font-weight: 600; color: #222; }
.vtab span { margin-left: auto; font-size: 8px; }
.vtab svg { width: 9px; height: 9px; }
.view-body { display: grid; flex: 1; min-height: 0; grid-template: 1fr 9px / 1fr 7px; background: #000; }
.plan { display: block; width: 100%; height: 100%; overflow: hidden; }
.vbar, .hbar { background: #f0f0f0; text-align: center; }
.hbar { grid-column: 1 / 3; text-align: right; padding-right: 8px; }
.vbar { display: flex; flex-direction: column; justify-content: space-between; font-weight: 400; }
.vbar i { height: 7px; border: 1px solid #aaa; background: #ddd; }
.cad { font: 14px "Liberation Serif", serif; fill: #e8e8e8; }
.cad .big { font-size: 15px; }
.cad .magenta { fill: #d400d4; }
.cad .yellow { fill: #e0e000; }
.cad .dim { font: 7px "Liberation Sans", sans-serif; fill: #c8901e; }

.dialog { position: absolute; inset: 215px 68px 0 260px; display: flex; flex-direction: column; padding: 0 5px 0 4px; border-radius: 4px 4px 0 0; border: 1px solid #6b6864; border-width: 1px 1px 0 0; background: linear-gradient(90deg, rgba(245, 244, 228, .8) 0, rgba(190, 205, 190, .6) 40px, rgba(48, 34, 28, .6) 80px, rgba(40, 28, 22, .6)); backdrop-filter: blur(2px) brightness(1.5); }
.dlg-title { display: flex; align-items: center; gap: 3px; height: 17px; flex: none; color: #111; }
.dlg-title svg { width: 8px; height: 8px; }
.dlg-title span { text-shadow: 0 0 3px #fff, 0 0 4px #fff; }
.dlg-ctl { display: flex; align-self: flex-start; margin-left: auto; border: 1px solid #756b65; border-top: 0; border-radius: 0 0 3px 3px; }
.dlg-ctl button { width: 16px; height: 10px; line-height: 10px; color: #fff; }
.dlg-ctl button:last-child { width: 26px; }
.dlg-ctl button + button { border-left: 1px solid #756b65; }
.dlg-body { display: flex; flex-direction: column; flex: 1; min-height: 0; background: #fff; border-left: 1px solid #8aa0b0; border-top: 1px solid #8aa0b0; }
.grid-wrap { display: flex; height: 205px; flex: none; }
.grid-clip { flex: 1; overflow: hidden; }
.beams { width: 100%; height: 214px; table-layout: fixed; border-collapse: collapse; line-height: 9px; text-align: center; }
.beams tr { height: 11px; }
.beams thead tr { height: 13px; }
.beams th { font-weight: 400; white-space: nowrap; background: linear-gradient(#fff, #f1f2f4); border-right: 1px solid #ddd; }
.beams .last { text-align: right; border: 0; }
.beams td { white-space: nowrap; border: 1px solid #555; border-width: 0 1px 1px; }
.beams td:first-child { border-left: 0; }
.beams td:last-child { border-right: 0; }
.beams .sel { background: #2fa58d; color: #fff; }
.c45 { width: 45px; }
.c50 { width: 50px; }
.c51 { width: 51px; }
.c61 { width: 61px; }
.c67 { width: 67px; }
.c68 { width: 68px; }
.c73 { width: 73px; }
.pick { display: flex; align-items: center; gap: 3px; padding-left: 2px; }
.pick.child { padding-left: 21px; }
.pick label { display: flex; align-items: center; gap: 1px; }
.pick input, .cell { appearance: none; width: 7px; height: 7px; border: 1px solid #a9a9b4; background: #e4e6f0; }
.pick input:checked::after { content: "✓"; display: block; font: 700 7px/5px "DejaVu Sans", sans-serif; color: #223a9a; }
.cell { display: block; margin: 0 auto; background: #d8dade; }
.faint { border-color: #ccc; background: #f7f7f7; }
.gv { display: flex; flex-direction: column; width: 9px; padding-top: 13px; text-align: center; background: #f0f0f0; }
.gv i { height: 72px; margin: 0 1px; border: 1px solid #aaa; background: linear-gradient(90deg, #fafafa, #d5d5d5); font-style: normal; padding-top: 26px; }
.gv b:last-child { margin-top: auto; }
.gh { display: flex; height: 10px; flex: none; background: #f0f0f0; border-bottom: 1px solid #a8bccb; line-height: 9px; color: #555; }
.gh b { width: 9px; text-align: center; }
.gh i { flex: 1; margin-right: 26px; border: 1px solid #aaa; border-radius: 1px; background: linear-gradient(#f2f2f2, #c8c8c8); text-align: center; font: 700 5px/7px "Liberation Sans", sans-serif; padding-right: 2px; }
.actions { display: flex; gap: 6px; padding: 3px 4px 0 2px; }
.actions button { width: 45px; height: 14px; border: 1px solid #ccc; background: #fff; line-height: 12px; }
.actions .wide { width: 56px; }
.actions .end { margin-left: auto; }
fieldset { margin: 5px 1px 0; padding: 0 0 6px 13px; border: 1px solid #dfe6ec; color: #4468d8; line-height: 9px; }
legend { margin-left: -10px; padding: 0 1px; line-height: 8px; }
fieldset p { white-space: nowrap; }
.actions.foot { justify-content: flex-end; gap: 8px; }

.markup { position: absolute; left: 260px; top: 200px; width: 740px; height: 205px; pointer-events: none; }
.markup text { font: 300 16px "Noto Sans CJK SC", sans-serif; fill: #f33; }

.watermark { position: absolute; right: 36px; bottom: 26px; display: flex; align-items: center; gap: 6px; pointer-events: none; }
.watermark svg { width: 44px; height: 38px; }
.watermark span { font: 300 26px/36px "Open Sans", "Noto Sans CJK SC", sans-serif; color: #fff; text-shadow: 1px 1px 1px #888, 0 0 1px #999; }
```
